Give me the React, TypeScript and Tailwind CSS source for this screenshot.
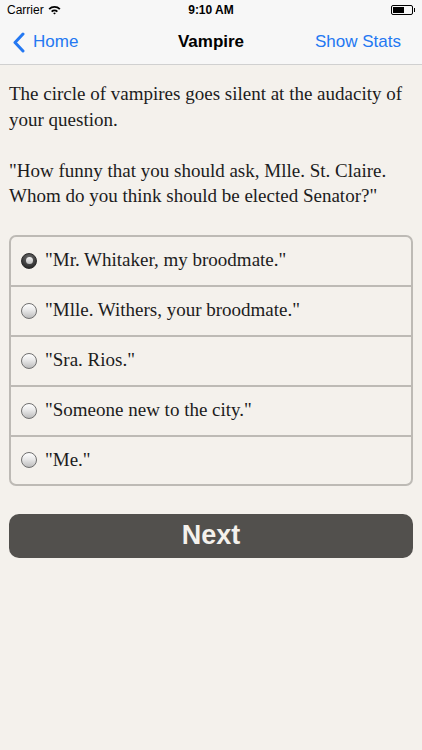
import React from "react";

const options = [
  '"Mr. Whitaker, my broodmate."',
  '"Mlle. Withers, your broodmate."',
  '"Sra. Rios."',
  '"Someone new to the city."',
  '"Me."',
];

function Radio({ checked }: { checked: boolean }) {
  if (checked) {
    return (
      <span className="flex h-[16px] w-[16px] shrink-0 items-center justify-center rounded-full border border-[#2a2a2a] bg-[radial-gradient(circle_at_50%_30%,#6e6e6e,#2a2a2a_80%)]">
        <span className="h-[7px] w-[7px] rounded-full bg-[linear-gradient(#f4f4f4,#bdbdbd)]" />
      </span>
    );
  }
  return (
    <span className="h-[16px] w-[16px] shrink-0 rounded-full border border-[#6f6f6f] bg-[linear-gradient(#ffffff,#e8e8e8_45%,#bcbcbc)]" />
  );
}

export default function App() {
  return (
    <div className="flex h-[750px] w-[422px] flex-col bg-[#f4f1ec] font-['Liberation_Sans',Arial,sans-serif]">
      <div className="bg-[#f7f7f7] border-b border-[#d0d0d0]">
        <div className="relative flex h-[20px] items-center px-[7px] text-[12px] text-black">
          <span>Carrier</span>
          <svg className="ml-[4px]" width="13" height="10" viewBox="0 0 13 10">
            <path d="M0.5 3.5 A8.5 8.5 0 0 1 12.5 3.5 L11.2 4.8 A6.6 6.6 0 0 0 1.8 4.8 Z" fill="#000" />
            <path d="M3 6 A5 5 0 0 1 10 6 L8.7 7.3 A3.2 3.2 0 0 0 4.3 7.3 Z" fill="#000" />
            <path d="M5.2 8.2 A1.9 1.9 0 0 1 7.8 8.2 L6.5 9.6 Z" fill="#000" />
          </svg>
          <span className="absolute left-0 right-0 text-center font-semibold">9:10 AM</span>
          <span className="ml-auto flex items-center">
            <span className="flex h-[10px] w-[22px] items-center rounded-[2px] border border-black p-[1px]">
              <span className="h-full w-[11px] bg-black" />
            </span>
            <span className="ml-[1px] h-[4px] w-[1.5px] bg-black" />
          </span>
        </div>
        <div className="relative flex h-[44px] items-center text-[17px]">
          <div className="flex items-center pl-[13px] text-[#2478f2]">
            <svg width="12" height="21" viewBox="0 0 12 21">
              <path d="M10 2 L2 10.5 L10 19" fill="none" stroke="#2478f2" strokeWidth="3" strokeLinecap="round" strokeLinejoin="round" />
            </svg>
            <span className="ml-[8px]">Home</span>
          </div>
          <span className="pointer-events-none absolute left-0 right-0 text-center font-bold text-black">Vampire</span>
          <span className="ml-auto pr-[21px] text-[#2478f2]">Show Stats</span>
        </div>
      </div>

      <div className="px-[9px] pt-[16px] font-['Liberation_Serif','Times_New_Roman',serif] text-[19px] leading-[25.5px] text-[#1c1c1c]">
        <p>The circle of vampires goes silent at the audacity of your question.</p>
        <p className="mt-[25.5px]">"How funny that you should ask, Mlle. St. Claire. Whom do you think should be elected Senator?"</p>
      </div>

      <div className="mx-[9px] mt-[26px] rounded-[7px] border-2 border-[#bdbab5] bg-[#f4f1ec]">
        {options.map((o, i) => (
          <div
            key={o}
            className={`flex items-center gap-[8px] pl-[10px] font-['Liberation_Serif','Times_New_Roman',serif] text-[19px] text-[#1c1c1c] ${i > 0 ? "border-t-2 border-[#bdbab5]" : ""} ${i === 0 || i === options.length - 1 ? (i === 0 ? "h-[48px]" : "h-[49px]") : "h-[50px]"}`}
          >
            <Radio checked={i === 0} />
            <span>{o}</span>
          </div>
        ))}
      </div>

      <button className="mx-[9px] mt-[28px] flex h-[44px] items-center justify-center rounded-[10px] bg-[#52504d] text-[27px] font-bold text-[#f4f1ec]">
        Next
      </button>
    </div>
  );
}
